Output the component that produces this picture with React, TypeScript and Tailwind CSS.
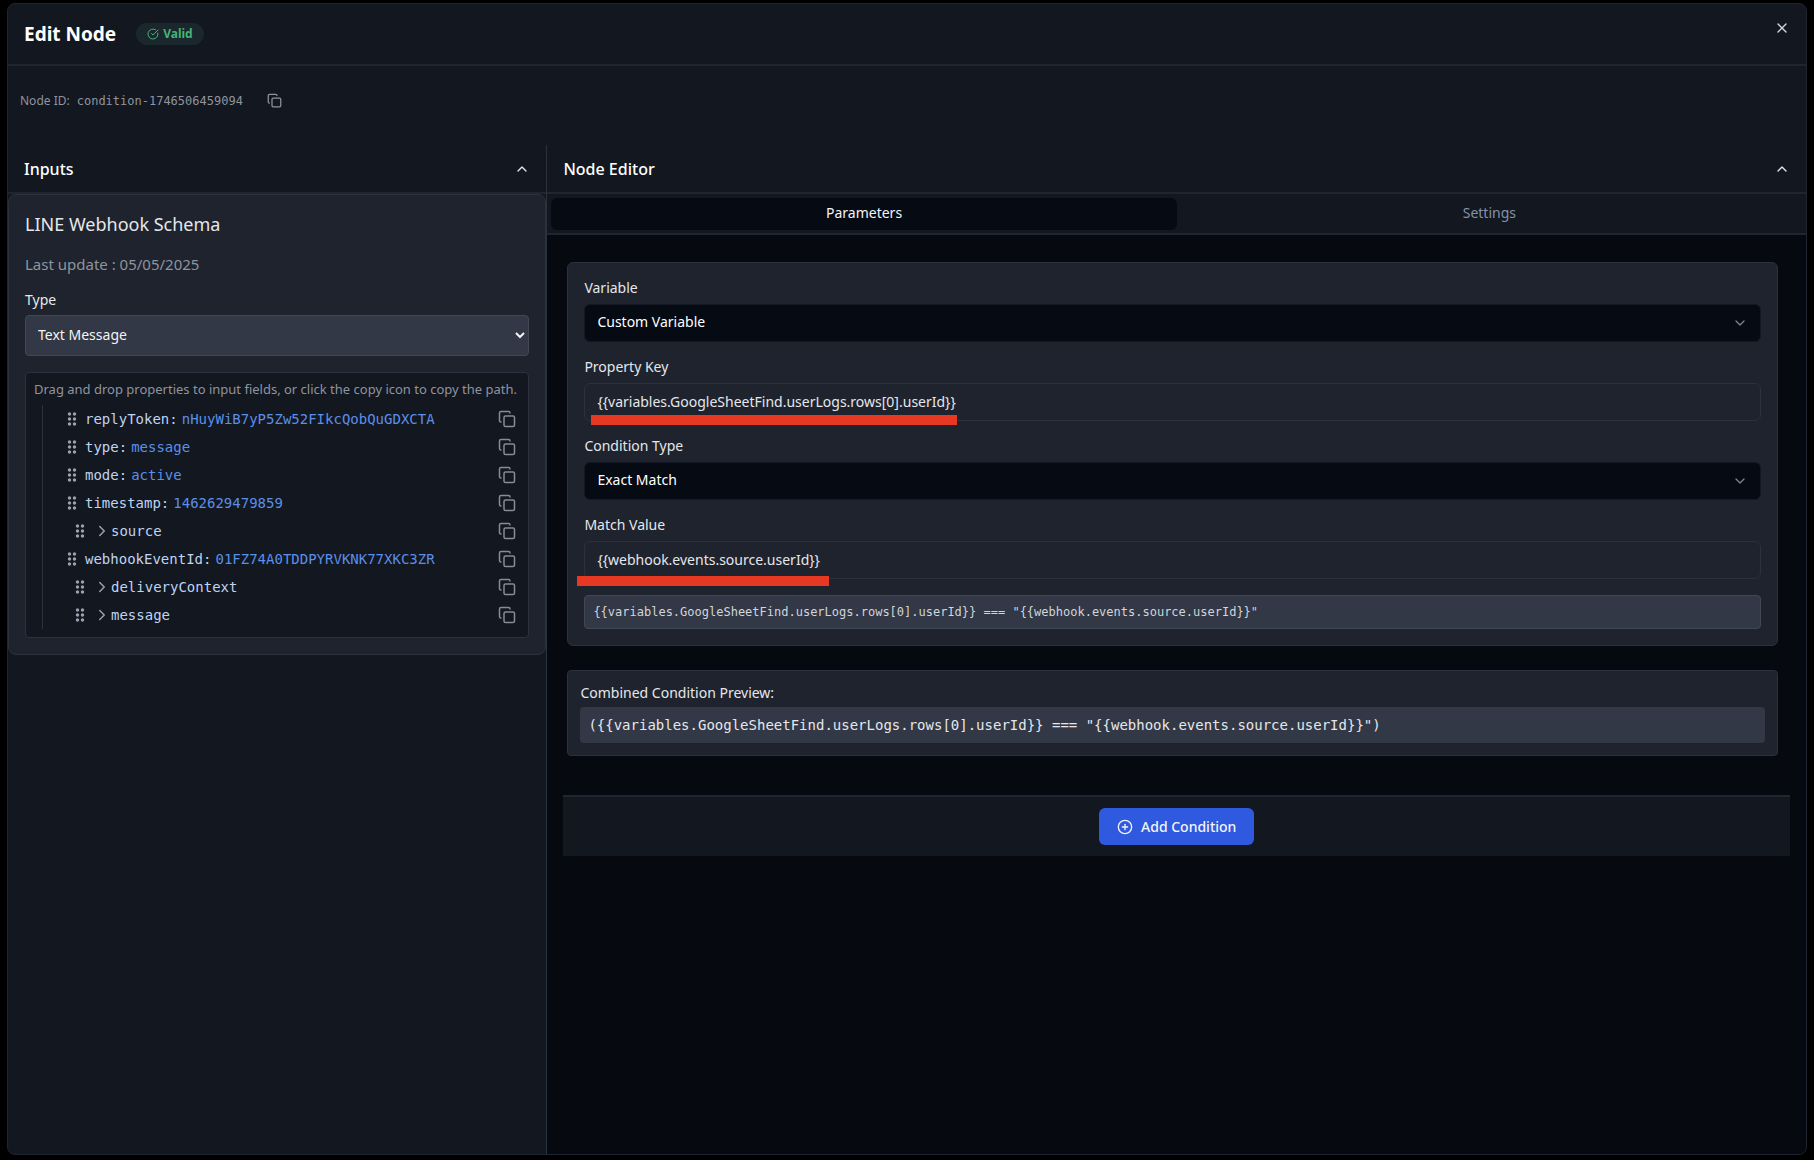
import { useState } from "react";
import { ChevronDown, ChevronRight, ChevronUp, CirclePlus, CircleCheckBig, Copy, X } from "lucide-react";
import { MdDragIndicator } from "react-icons/md";

type SchemaRow = { name: string; value?: string };

const rows: SchemaRow[] = [
  { name: "replyToken", value: "nHuyWiB7yP5Zw52FIkcQobQuGDXCTA" },
  { name: "type", value: "message" },
  { name: "mode", value: "active" },
  { name: "timestamp", value: "1462629479859" },
  { name: "source" },
  { name: "webhookEventId", value: "01FZ74A0TDDPYRVKNK77XKC3ZR" },
  { name: "deliveryContext" },
  { name: "message" },
];

const mono = "font-['DejaVu_Sans_Mono','Liberation_Mono',monospace]";

function PanelHeader({ title }: { title: string }) {
  return (
    <div className="flex h-[49px] items-center justify-between border-b-2 border-[#20252f] px-4">
      <h2 className="text-base font-medium text-white">{title}</h2>
      <button type="button" aria-label={`Collapse ${title}`} className="text-gray-200">
        <ChevronUp size={16} />
      </button>
    </div>
  );
}

function TreeRow({ row }: { row: SchemaRow }) {
  const nested = row.value === undefined;
  return (
    <li className={`flex h-7 items-center pr-1 text-sm ${nested ? "pl-[27px]" : "pl-[19px]"}`}>
      <MdDragIndicator size={20} className="shrink-0 text-gray-400" />
      {nested ? (
        <button type="button" className="ml-[3px] flex items-center text-[#bfd3f2]">
          <ChevronRight size={18} className="text-gray-400" />
          <span className={mono}>{row.name}</span>
        </button>
      ) : (
        <span className={`ml-[3px] whitespace-nowrap ${mono}`}>
          <span className="mr-1 text-[#bfd3f2]">{row.name}:</span>
          <span className="text-[#5b8fe8]">{row.value}</span>
        </span>
      )}
      <button type="button" aria-label={`Copy ${row.name}`} className="ml-auto text-[#868b95]">
        <Copy size={18} />
      </button>
    </li>
  );
}

function SelectField({ id, label, value }: { id: string; label: string; value: string }) {
  return (
    <div>
      <label htmlFor={id} className="block text-sm leading-[33px] text-gray-200">
        {label}
      </label>
      <div className="relative">
        <select
          id={id}
          className="h-[38px] w-full appearance-none rounded-md border border-[#131822] bg-[#060a13] px-3 pb-[2px] text-sm text-white"
        >
          <option>{value}</option>
        </select>
        <ChevronDown size={16} className="pointer-events-none absolute top-[11px] right-[13px] text-gray-400/80" />
      </div>
    </div>
  );
}

function TextField({ id, label, value, mark }: { id: string; label: string; value: string; mark: string }) {
  return (
    <div>
      <label htmlFor={id} className="block text-sm leading-[33px] text-gray-200">
        {label}
      </label>
      <div className="relative">
        <input
          id={id}
          defaultValue={value}
          className="h-[38px] w-full rounded-md border border-[#2b313d] bg-transparent px-3 pb-[2px] text-sm text-gray-200"
        />
        <span className={`absolute h-[10px] bg-[#e63823] ${mark}`} />
      </div>
    </div>
  );
}

export default function App() {
  const [tab, setTab] = useState("Parameters");

  return (
    <main className="h-screen bg-black px-[7px] pt-[3px] pb-[5px] font-['Noto_Sans','Open_Sans',sans-serif]">
      <div className="flex h-full flex-col overflow-hidden rounded-lg border border-[#1e2430] bg-[#131720]">
        <header className="flex h-[62px] shrink-0 items-center border-b-2 border-[#20252f] px-4">
          <h1 className="text-[19px] font-bold text-white">Edit Node</h1>
          <span className="ml-5 flex h-[22px] items-center gap-1 rounded-full bg-[#1a272c] px-[11px] text-xs font-bold text-[#46b278]">
            <CircleCheckBig size={12} />
            Valid
          </span>
          <button type="button" aria-label="Close" className="mb-3 ml-auto text-gray-300">
            <X size={16} />
          </button>
        </header>

        <div className="flex h-[79px] shrink-0 items-center px-3 pb-[10px] text-xs text-[#8f949e]">
          <span>Node ID:</span>
          <span className={`ml-[7px] ${mono}`}>{"condition-1746506459094"}</span>
          <button type="button" aria-label="Copy node ID" className="ml-6">
            <Copy size={15} />
          </button>
        </div>

        <div className="flex min-h-0 grow">
          <aside className="w-[30%] shrink-0 border-r border-[#2b313d]">
            <PanelHeader title="Inputs" />
            <section className="rounded-lg border border-[#2b313d] bg-[#1e232e] px-4 pt-[15px] pb-4">
              <h3 className="text-lg leading-7 text-gray-200">LINE Webhook Schema</h3>
              <p className="mt-4 text-[15px] leading-5 text-[#8f949e]">Last update : 05/05/2025</p>
              <label htmlFor="schema-type" className="mt-4 block text-sm text-gray-200">
                Type
              </label>
              <select
                id="schema-type"
                className="mt-[5px] h-[41px] w-full rounded border border-[#414855] bg-[#323845] px-2 pb-[2px] text-sm text-gray-100"
              >
                <option>Text Message</option>
              </select>
              <div className="mt-4 rounded border border-[#2b313d] bg-[#131720] p-2">
                <p className="text-[13px] leading-4 whitespace-nowrap text-[#8f949e]">
                  Drag and drop properties to input fields, or click the copy icon to copy the path.
                </p>
                <ul className="mt-2 ml-2 border-l border-[#2b313d]">
                  {rows.map((row) => (
                    <TreeRow key={row.name} row={row} />
                  ))}
                </ul>
              </div>
            </section>
          </aside>

          <section className="flex min-w-0 grow flex-col">
            <PanelHeader title="Node Editor" />
            <div role="tablist" className="grid grid-cols-2 border-b-2 border-[#20252f] p-1 pb-[3px]">
              {["Parameters", "Settings"].map((name) => (
                <button
                  key={name}
                  type="button"
                  role="tab"
                  aria-selected={tab === name}
                  onClick={() => setTab(name)}
                  className={`h-8 rounded-md pb-[2px] text-sm ${
                    tab === name ? "bg-[#060a13] text-gray-100" : "text-[#8391ab]"
                  }`}
                >
                  {name}
                </button>
              ))}
            </div>

            <div className="grow bg-[#060910] px-4 pt-[27px]">
              <div className="mr-3 ml-1 space-y-6">
                <div className="rounded-md border border-[#2b313d] bg-[#1e232e] px-4 pt-2 pb-4">
                  <div className="space-y-2">
                    <SelectField id="variable" label="Variable" value="Custom Variable" />
                    <TextField
                      id="property-key"
                      label="Property Key"
                      value="{{variables.GoogleSheetFind.userLogs.rows[0].userId}}"
                      mark="top-8 left-[7px] w-[366px]"
                    />
                    <SelectField id="condition-type" label="Condition Type" value="Exact Match" />
                    <TextField
                      id="match-value"
                      label="Match Value"
                      value="{{webhook.events.source.userId}}"
                      mark="top-[35px] -left-[7px] w-[252px]"
                    />
                  </div>
                  <div
                    className={`mt-4 rounded border border-[#414855] bg-[#323845] px-2 py-2 text-xs text-gray-300 ${mono}`}
                  >
                    {'{{variables.GoogleSheetFind.userLogs.rows[0].userId}} === "{{webhook.events.source.userId}}"'}
                  </div>
                </div>

                <div className="rounded border border-[#2b313d] bg-[#1e232e] p-3">
                  <p className="text-sm text-gray-200">Combined Condition Preview:</p>
                  <div className={`mt-1 rounded bg-[#323845] p-2 text-sm text-gray-200 ${mono}`}>
                    {'({{variables.GoogleSheetFind.userLogs.rows[0].userId}} === "{{webhook.events.source.userId}}")'}
                  </div>
                </div>
              </div>

              <footer className="mt-[39px] flex justify-center border-t-2 border-[#20252f] bg-[#131720] py-[11px]">
                <button
                  type="button"
                  className="flex h-[37px] items-center gap-2 rounded-md bg-[#2f59df] px-[18px] text-sm font-medium text-gray-100"
                >
                  <CirclePlus size={16} />
                  Add Condition
                </button>
              </footer>
            </div>
          </section>
        </div>
      </div>
    </main>
  );
}
